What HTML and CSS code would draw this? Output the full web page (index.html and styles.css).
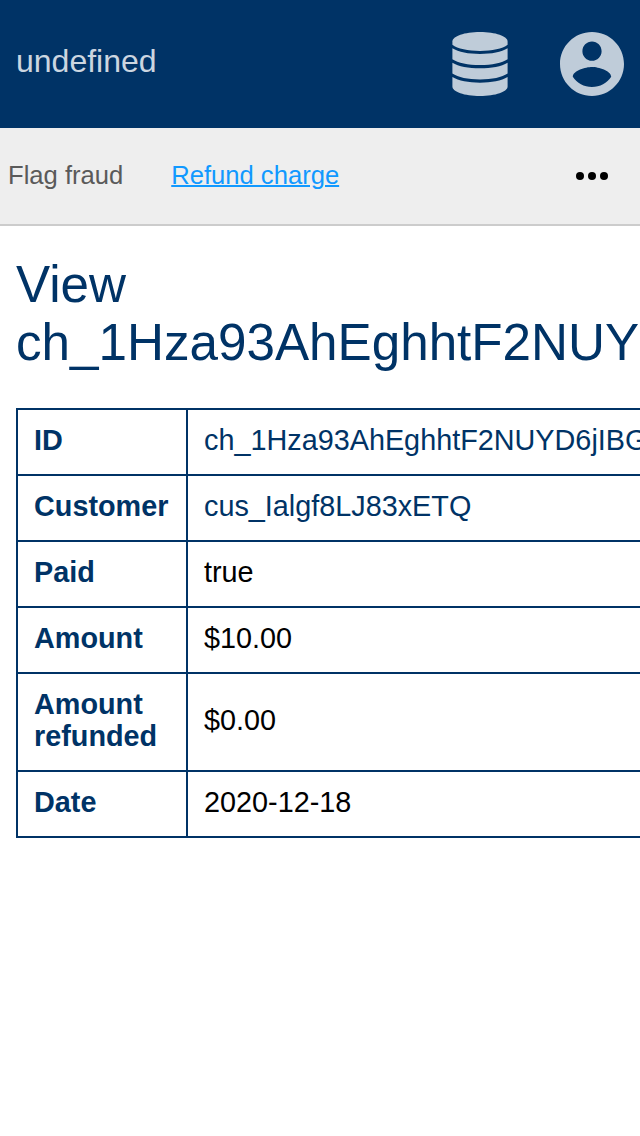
FILE: index.html
```html
<!DOCTYPE html>
<html lang="en">
<head>
<meta charset="utf-8">
<title>View charge</title>
<link rel="stylesheet" href="styles.css">
</head>
<body>
<header class="topbar">
  <span class="brand">undefined</span>
  <nav class="icons">
    <svg class="database" viewBox="0 0 56 64"><path d="M28 0C43.500 0 55.600 4.200 55.600 9.500V12.800C50.500 16.800 40 19 28 19S5.500 16.800 .4 12.800V9.500C.4 4.200 12.500 0 28 0z"/><path d="M.4 16.300C6.500 20 16.500 22 28 22S49.500 20 55.600 16.300V27.200C50 31 40 33.100 28 33.100S6 31 .4 27.200z"/><path d="M.4 30.700C6.500 34.400 16.500 36.300 28 36.300S49.500 34.400 55.600 30.700V41.600C50 45.400 40 47.500 28 47.500S6 45.400 .4 41.600z"/><path d="M.4 45C6.500 48.700 16.500 50.700 28 50.700S49.500 48.700 55.600 45V54.500C55.600 59.800 43.500 64 28 64S.4 59.800 .4 54.500z"/></svg>
    <svg class="account" viewBox="2 2 20 20"><path d="M12 2C6.480 2 2 6.480 2 12s4.480 10 10 10 10-4.480 10-10S17.520 2 12 2zm0 3c1.660 0 3 1.340 3 3s-1.340 3-3 3-3-1.340-3-3 1.340-3 3-3zm0 14.200c-2.500 0-4.710-1.280-6-3.220.030-1.990 4-3.080 6-3.080 1.990 0 5.970 1.090 6 3.080-1.290 1.940-3.500 3.220-6 3.220z"/></svg>
  </nav>
</header>
<div class="actions">
  <span class="action">Flag fraud</span>
  <a class="action link" href="#">Refund charge</a>
  <svg class="more" viewBox="0 0 32 8"><circle cx="4" cy="4" r="4"/><circle cx="16" cy="4" r="4"/><circle cx="28" cy="4" r="4"/></svg>
</div>
<main class="content">
  <h1 class="title">View ch_1Hza93AhEghhtF2NUYD6jIBG</h1>
  <table class="details">
    <tr><th>ID</th><td class="ref">ch_1Hza93AhEghhtF2NUYD6jIBG</td></tr>
    <tr><th>Customer</th><td class="ref">cus_Ialgf8LJ83xETQ</td></tr>
    <tr><th>Paid</th><td>true</td></tr>
    <tr><th>Amount</th><td>$10.00</td></tr>
    <tr><th>Amount refunded</th><td>$0.00</td></tr>
    <tr><th>Date</th><td>2020-12-18</td></tr>
  </table>
</main>
</body>
</html>
```
FILE: styles.css
```css
* { box-sizing: border-box; }
body { margin: 0; height: 1136px; overflow: hidden; background: #fff; color: #000; font-family: "Liberation Sans", Arial, sans-serif; }
.topbar { display: flex; align-items: center; justify-content: space-between; height: 128px; padding: 0 16px; background: #003366; }
.brand { font-size: 32px; line-height: 36px; padding-bottom: 7px; color: #ccd6e0; }
.icons { display: flex; gap: 52px; fill: #bfccd9; }
.icons svg { display: block; height: 64px; }
.database { width: 56px; }
.account { width: 64px; }
.actions { display: flex; align-items: center; gap: 48px; height: 98px; padding: 0 32px 0 8px; background: #eee; border-bottom: 2px solid #ccc; font-size: 25.6px; line-height: 30px; color: #5a5a5a; }
.action { padding-bottom: 2px; }
.link { color: #1199ff; text-decoration: underline; text-decoration-thickness: 2px; }
.more { width: 32px; height: 8px; margin-left: auto; }
.content { padding: 30px 16px; color: #003366; }
.title { margin: 0 0 36px; font-size: 51.2px; font-weight: 400; line-height: 58px; }
.details { width: 640px; border-collapse: collapse; table-layout: fixed; font-size: 28.8px; line-height: 32px; }
.details th, .details td { height: 66px; padding: 14px 16px 18px; border: 2px solid #003366; text-align: left; vertical-align: middle; }
.details th { width: 170px; }
.details td { color: #000; white-space: nowrap; }
.details .ref { color: #003366; }
```
